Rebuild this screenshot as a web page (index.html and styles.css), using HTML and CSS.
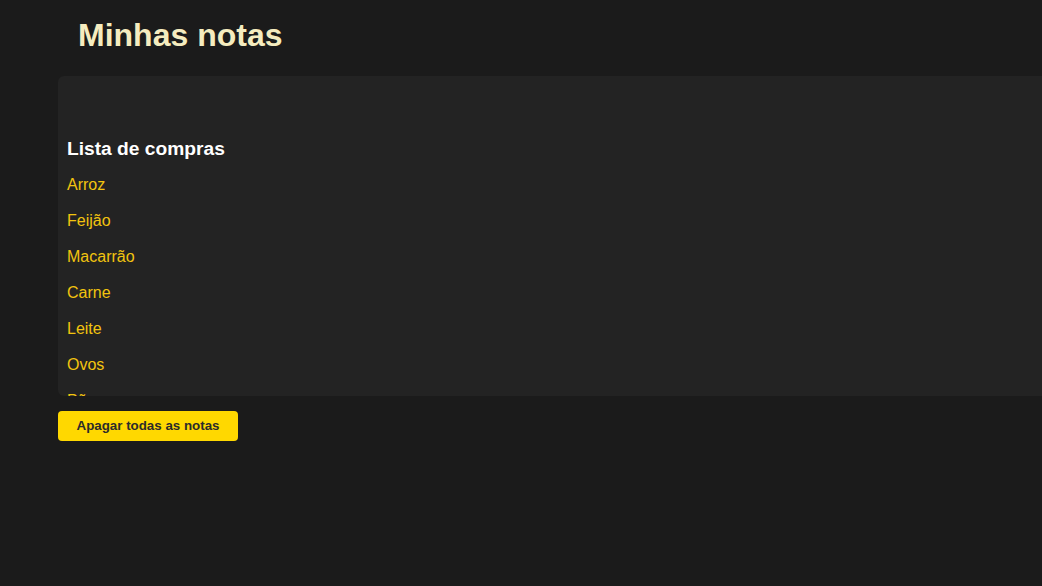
FILE: index.html
```html
<!DOCTYPE html>
<html lang="pt">
<head>
<meta charset="utf-8">
<title>Minhas notas</title>
<link rel="stylesheet" href="styles.css">
</head>
<body>
<header class="top">
  <h1 class="title">Minhas notas</h1>
</header>
<main class="content">
  <section class="panel">
    <article class="note">
      <h2 class="note-title">Lista de compras</h2>
      <p class="item">Arroz</p>
      <p class="item">Feijão</p>
      <p class="item">Macarrão</p>
      <p class="item">Carne</p>
      <p class="item">Leite</p>
      <p class="item">Ovos</p>
      <p class="item">Pão</p>
      <p class="item">Café</p>
    </article>
  </section>
  <button class="clear-btn">Apagar todas as notas</button>
</main>
</body>
</html>
```

FILE: styles.css
```css
html, body {
  margin: 0;
  padding: 0;
  background: #1b1b1b;
  font-family: "Liberation Sans", Arial, sans-serif;
  overflow: hidden;
}
.top {
  padding: 17px 0 0 78px;
  height: 59px;
}
.title {
  margin: 0;
  font-size: 32px;
  line-height: 37px;
  font-weight: bold;
  color: #f5ecbf;
}
.content {
  padding-left: 58px;
}
.panel {
  background: #232323;
  height: 320px;
  border-radius: 6px 0 0 6px;
  overflow: hidden;
  box-sizing: border-box;
  padding: 61px 9px 0 9px;
}
.note-title {
  margin: 0 0 7px 0;
  font-size: 19.2px;
  line-height: 23px;
  font-weight: bold;
  color: #ffffff;
}
.item {
  margin: 0;
  font-size: 16px;
  line-height: 36px;
  color: #f2c40f;
}
.clear-btn {
  display: block;
  margin-top: 15px;
  width: 180px;
  height: 30px;
  background: #ffd800;
  border: none;
  border-radius: 4px;
  font-family: "Liberation Sans", Arial, sans-serif;
  font-size: 13.33px;
  font-weight: bold;
  color: #2b2b2b;
  padding: 0 0 1px 0;
}
```
